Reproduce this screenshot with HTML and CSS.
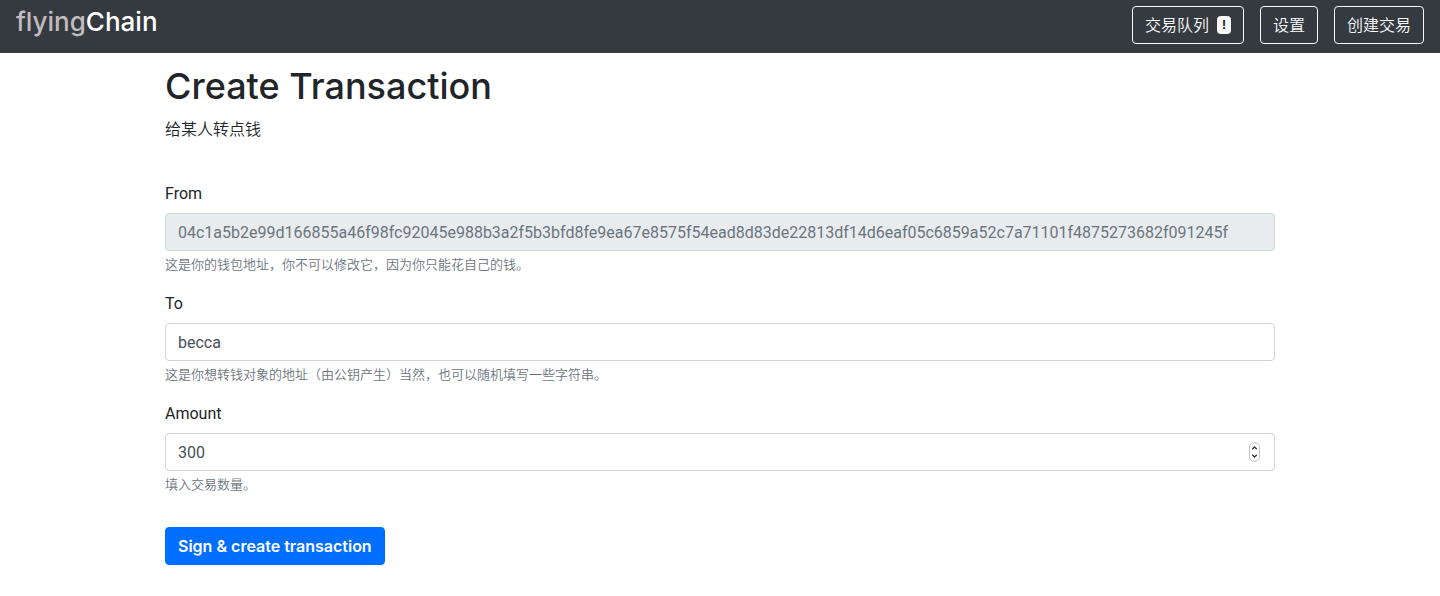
FILE: index.html
```html
<!DOCTYPE html>
<html lang="zh-CN">
<head>
  <meta charset="utf-8">
  <meta name="viewport" content="width=device-width, initial-scale=1">
  <title>flyingChain - Create Transaction</title>
  <link rel="stylesheet" href="styles.css">
</head>
<body>
  <header class="navbar">
    <a class="brand" href="#"><span class="brand-muted">flying</span>Chain</a>
    <nav class="nav-actions">
      <a class="nav-button" href="#pending">交易队列 <span class="badge">!</span></a>
      <a class="nav-button" href="#settings">设置</a>
      <a class="nav-button" href="#create">创建交易</a>
    </nav>
  </header>
  <main class="container">
    <h1 class="title">Create Transaction</h1>
    <p class="lead">给某人转点钱</p>
    <form class="form">
      <div class="form-group">
        <label class="label" for="from">From</label>
        <input class="control" id="from" type="text" disabled value="04c1a5b2e99d166855a46f98fc92045e988b3a2f5b3bfd8fe9ea67e8575f54ead8d83de22813df14d6eaf05c6859a52c7a71101f4875273682f091245f">
        <small class="help">这是你的钱包地址，你不可以修改它，因为你只能花自己的钱。</small>
      </div>
      <div class="form-group">
        <label class="label" for="to">To</label>
        <input class="control" id="to" type="text" value="becca">
        <small class="help">这是你想转钱对象的地址（由公钥产生）当然，也可以随机填写一些字符串。</small>
      </div>
      <div class="form-group">
        <label class="label" for="amount">Amount</label>
        <div class="number-field">
          <input class="control" id="amount" type="number" value="300">
          <svg class="stepper" viewBox="0 0 13 20" aria-hidden="true">
            <rect x="1.5" y="0.8" width="10" height="18.4" rx="4.5" fill="#fff" stroke="#c2c2c2"/>
            <path d="M4.2 7.2 6.5 5l2.3 2.2M4.2 12.8 6.5 15l2.3-2.2" fill="none" stroke="#333" stroke-width="1.3"/>
          </svg>
        </div>
        <small class="help">填入交易数量。</small>
      </div>
      <button class="submit" type="submit">Sign &amp; create transaction</button>
    </form>
  </main>
</body>
</html>
```
FILE: styles.css
```css
*,
*::before,
*::after {
  box-sizing: border-box;
}

body {
  margin: 0;
  background: #fff;
  color: #212529;
  font-family: Inter, "Noto Sans CJK SC", sans-serif;
  font-size: 16px;
  line-height: 24px;
}

.navbar {
  display: flex;
  align-items: flex-start;
  justify-content: space-between;
  padding: 6px 16px 9px;
  background: #343a40;
}

.brand {
  color: #fff;
  font-size: 26px;
  font-weight: 500;
  line-height: 32px;
  text-decoration: none;
}

.brand-muted {
  color: #c3bbbf;
}

.nav-actions {
  display: flex;
  gap: 16px;
}

.nav-button {
  display: flex;
  align-items: center;
  gap: 8px;
  padding: 6px 12px;
  border: 1px solid #f8f9fa;
  border-radius: 4px;
  color: #f8f9fa;
  font-weight: 350;
  text-decoration: none;
}

.badge {
  padding: 3px 5px;
  border-radius: 4px;
  background: #f8f9fa;
  color: #212529;
  font-size: 12px;
  font-weight: 700;
  line-height: 12px;
}

.container {
  max-width: 1140px;
  margin: 0 auto;
  padding: 8px 15px 31px;
}

.title {
  margin: 0 0 6px;
  font-size: 36px;
  font-weight: 500;
  line-height: 50px;
}

.lead {
  margin: 0 0 40px;
  font-weight: 350;
}

.form-group {
  margin-bottom: 17px;
}

.label {
  display: block;
  margin-bottom: 6px;
  font-family: Roboto, sans-serif;
  line-height: 26px;
}

.control {
  display: block;
  width: 100%;
  height: 38px;
  padding: 6px 12px;
  border: 1px solid #ced4da;
  border-radius: 4px;
  background: #fff;
  color: #495057;
  font-family: Roboto, sans-serif;
  font-size: 16px;
  line-height: 24px;
}

.control:disabled {
  background: #e9ecef;
  color: #6c757d;
}

.control[type="number"] {
  appearance: textfield;
}

.number-field {
  position: relative;
}

.stepper {
  position: absolute;
  top: 9px;
  right: 14px;
  width: 13px;
  height: 20px;
}

.help {
  display: block;
  margin-top: 3px;
  color: #6c757d;
  font-size: 13px;
  font-weight: 350;
  line-height: 20px;
}

.submit {
  margin-top: 16px;
  padding: 6px 12px;
  border: 1px solid #006eff;
  border-radius: 4px;
  background: #006eff;
  color: #fff;
  font: inherit;
  font-weight: 600;
}
```
